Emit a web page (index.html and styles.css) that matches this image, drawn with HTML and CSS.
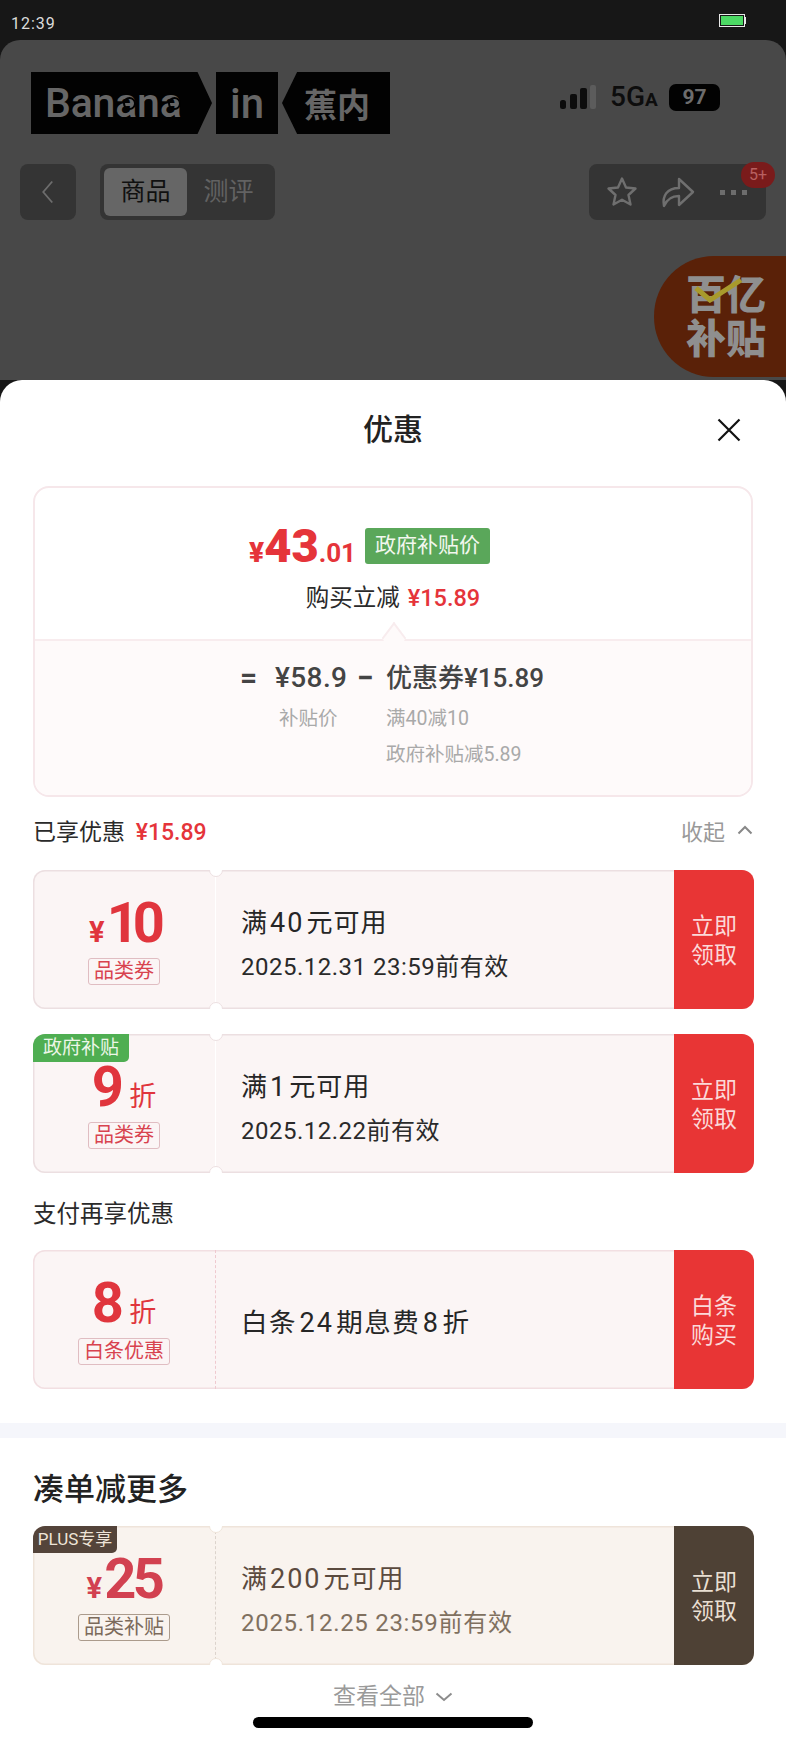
FILE: index.html
```html
<!DOCTYPE html>
<html lang="zh">
<head>
<meta charset="utf-8">
<title>优惠</title>
<link rel="stylesheet" href="styles.css">
</head>
<body>
<div class="status">
  <span class="time">12:39</span>
  <span class="battery"><span class="battery-fill"></span></span>
</div>
<div class="backdrop">
  <div class="promo-row">
    <div class="logo">
      <span class="logo-a">Banana<i class="glitch-one"></i><i class="glitch-ring"></i></span>
      <span class="logo-b">in</span>
      <span class="logo-c">蕉内</span>
    </div>
    <div class="net">
      <svg class="signal" viewBox="0 0 36 24" width="36" height="24"><rect x="0" y="15" width="6" height="9" rx="2.5" fill="#0c0c0c"/><rect x="10" y="9" width="7" height="15" rx="2" fill="#0c0c0c"/><rect x="20" y="3" width="7" height="21" rx="2" fill="#0c0c0c"/><rect x="30" y="0" width="6" height="24" rx="2" fill="#5c5c5c"/></svg>
      <span class="net-name">5G<small>A</small></span>
      <span class="net-level">97</span>
    </div>
  </div>
  <div class="nav-row">
    <div class="nav-box back">
      <svg viewBox="0 0 20 32" width="15" height="24"><path d="M15 2 3 16l12 14" fill="none" stroke="#6d6d6d" stroke-width="2.4"/></svg>
    </div>
    <div class="nav-box tabs"><span class="tab active">商品</span><span class="tab">测评</span></div>
    <div class="nav-box tools">
      <svg viewBox="0 0 32 32" width="32" height="32"><path d="M16 2.500l4 9 9.500 1-7 6.500 2 9.500-8.500-4.800-8.500 4.800 2-9.500-7-6.500 9.500-1z" fill="none" stroke="#6f6f6f" stroke-width="2.400" stroke-linejoin="round"/></svg>
      <svg viewBox="0 0 34 32" width="34" height="32"><path d="M3 30c-2-10 3-18 15-18V3l14 13-14 13v-9C11 20 6 23 3 30z" fill="none" stroke="#6f6f6f" stroke-width="2.400" stroke-linejoin="round"/></svg>
      <span class="dots"><i></i><i></i><i></i></span>
      <span class="count">5+</span>
    </div>
  </div>
  <div class="subsidy-row">
    <div class="subsidy">
      <span class="subsidy-text">百亿<br>补贴</span>
      <svg class="subsidy-check" viewBox="0 0 50 26" width="50" height="26"><path d="M3 11l14 12L48 3" fill="none" stroke="#a89a2c" stroke-width="5"/></svg>
    </div>
  </div>
</div>
<div class="sheet">
  <div class="sheet-head">
    <span></span>
    <h1 class="sheet-title">优惠</h1>
    <svg class="close" viewBox="0 0 24 24" width="24" height="24"><path d="M1.500 1.500l21 21M22.500 1.500l-21 21" fill="none" stroke="#111" stroke-width="2.200"/></svg>
  </div>
  <div class="body">
    <div class="summary">
      <div class="summary-top">
        <div class="price-row">
          <span class="price red"><span class="p-yen">¥</span><span class="p-int">43</span><span class="p-dec">.01</span></span>
          <span class="price-tag">政府补贴价</span>
        </div>
        <div class="saving">购买立减 <b class="red">¥15.89</b></div>
      </div>
      <div class="summary-bottom">
        <span class="op">=</span>
        <span class="calc calc-base">¥58.9</span>
        <span class="op">−</span>
        <span class="calc">优惠券¥15.89</span>
        <span></span>
        <span class="note note-center">补贴价</span>
        <span></span>
        <span class="note">满40减10<br>政府补贴减5.89</span>
      </div>
    </div>

    <div class="row-head enjoyed">
      <span>已享优惠 <b class="red">¥15.89</b></span>
      <span class="fold">收起
        <svg viewBox="0 0 16 10" width="16" height="10"><path d="M1.500 8.500 8 2l6.500 6.500" fill="none" stroke="#888" stroke-width="2"/></svg>
      </span>
    </div>

    <div class="coupon">
      <div class="coupon-left">
        <div class="amount"><span class="yen">¥</span><span class="num tight">10</span></div>
        <span class="kind">品类券</span>
      </div>
      <div class="coupon-main">
        <div class="cond">满<span class="d">40</span>元可用</div>
        <div class="date">2025.12.31 23:59前有效</div>
      </div>
      <div class="coupon-btn">立即<br>领取</div>
      <i class="cut top"></i><i class="cut bottom"></i>
    </div>

    <div class="coupon second">
      <span class="flag">政府补贴</span>
      <div class="coupon-left">
        <div class="amount"><span class="num">9</span><span class="unit">折</span></div>
        <span class="kind">品类券</span>
      </div>
      <div class="coupon-main">
        <div class="cond">满<span class="d">1</span>元可用</div>
        <div class="date">2025.12.22前有效</div>
      </div>
      <div class="coupon-btn">立即<br>领取</div>
      <i class="cut top"></i><i class="cut bottom"></i>
    </div>

    <div class="row-head pay">支付再享优惠</div>

    <div class="coupon dashed">
      <div class="coupon-left">
        <div class="amount"><span class="num">8</span><span class="unit">折</span></div>
        <span class="kind">白条优惠</span>
      </div>
      <div class="coupon-main center">
        <div class="cond">白条<span class="d">24</span>期息费<span class="d">8</span>折</div>
      </div>
      <div class="coupon-btn">白条<br>购买</div>
    </div>
  </div>

  <div class="band"></div>

  <div class="body">
    <h2 class="more">凑单减更多</h2>
    <div class="coupon plus">
      <span class="flag">PLUS专享</span>
      <div class="coupon-left">
        <div class="amount"><span class="yen">¥</span><span class="num">25</span></div>
        <span class="kind">品类补贴</span>
      </div>
      <div class="coupon-main">
        <div class="cond">满<span class="d">200</span>元可用</div>
        <div class="date">2025.12.25 23:59前有效</div>
      </div>
      <div class="coupon-btn">立即<br>领取</div>
      <i class="cut top"></i><i class="cut bottom"></i>
    </div>
    <div class="see-all">查看全部
      <svg viewBox="0 0 18 10" width="18" height="10"><path d="M1.500 1.500 9 8l7.500-6.500" fill="none" stroke="#8c8c8c" stroke-width="2"/></svg>
    </div>
  </div>
  <div class="home-bar"></div>
</div>
</body>
</html>
```
FILE: styles.css
```css
* { box-sizing: border-box; }
html, body { margin: 0; padding: 0; }
body {
  width: 786px;
  height: 1744px;
  overflow: hidden;
  background: #171717;
  color: #222;
  font-family: Roboto, "Noto Sans CJK SC", sans-serif;
}
.red { color: #e5343a; }
b { font-weight: 500; }

/* status bar */
.status {
  height: 40px;
  display: flex;
  align-items: center;
  justify-content: space-between;
  padding: 6px 41px 0 11px;
  background: #171717;
}
.time { color: #dcdcdc; font-size: 16px; letter-spacing: 1px; }
.battery {
  position: relative;
  width: 26px;
  height: 13px;
  padding: 1px;
  border: 1px solid #e8e8e8;
  margin-top: -6px;
}
.battery::after {
  content: "";
  position: absolute;
  left: 24px;
  top: 2px;
  width: 2px;
  height: 7px;
  background: #e8e8e8;
}
.battery-fill { display: block; height: 100%; background: #4cd964; }

/* dimmed page behind the sheet */
.backdrop {
  height: 340px;
  padding-top: 32px;
  background: #484848;
  border-radius: 20px 20px 0 0;
}
.promo-row {
  display: flex;
  justify-content: space-between;
  align-items: flex-start;
  height: 62px;
  padding: 0 66px 0 31px;
}
.logo { display: flex; height: 62px; color: #666; }
.logo span { display: flex; align-items: center; background: #020202; }
.logo-a {
  position: relative;
  width: 181px;
  padding-left: 14px;
  font-size: 41px;
  font-weight: 500;
  letter-spacing: -.2px;
  clip-path: polygon(0 0, 92% 0, 100% 50%, 92% 100%, 0 100%);
}
.glitch-one, .glitch-ring {
  position: absolute;
  top: 25px;
  width: 13px;
  height: 13px;
  border: 2.500px solid #020202;
  border-radius: 50%;
}
.glitch-one { left: 92px; }
.glitch-ring { left: 137px; }
.logo-b {
  width: 62px;
  margin-left: 4px;
  justify-content: center;
  font-size: 42px;
  font-weight: 500;
}
.logo-c {
  width: 108px;
  margin-left: 4px;
  padding-left: 22px;
  font-size: 33px;
  font-weight: 700;
  clip-path: polygon(0 50%, 14% 0, 100% 0, 100% 100%, 14% 100%);
}
.net { display: flex; align-items: center; height: 40px; margin-top: 5px; }
.signal { margin-right: 14px; }
.net-name { width: 59px; color: #0d0d0d; font-size: 28px; font-weight: 500; line-height: 1; }
.net-name small { font-size: 19px; font-weight: 700; }
.net-level {
  width: 51px;
  height: 27px;
  border-radius: 7px;
  background: #020202;
  color: #6c6c6c;
  font-size: 21px;
  font-weight: 700;
  line-height: 27px;
  text-align: center;
}

.nav-row { display: flex; height: 56px; margin-top: 30px; padding: 0 20px; }
.nav-box {
  display: flex;
  align-items: center;
  height: 56px;
  border-radius: 8px;
  background: #343434;
}
.back { width: 56px; justify-content: center; }
.tabs { width: 175px; margin-left: 24px; padding: 4px; }
.tab { width: 83px; color: #626262; font-size: 25px; line-height: 48px; text-align: center; }
.tab.active { border-radius: 6px; background: #666; color: #101010; }
.tools {
  position: relative;
  width: 177px;
  margin-left: auto;
  padding-left: 17px;
  gap: 23px;
}
.dots { display: flex; gap: 6px; margin-left: 2px; }
.dots i { width: 5px; height: 5px; background: #6d6d6d; }
.count {
  position: absolute;
  right: -9px;
  top: -2px;
  width: 34px;
  height: 26px;
  border-radius: 14px;
  background: #7a1b1b;
  color: #b86060;
  font-size: 16px;
  line-height: 26px;
  text-align: center;
}
.subsidy-row { display: flex; justify-content: flex-end; margin-top: 36px; }
.subsidy {
  position: relative;
  width: 132px;
  height: 121px;
  padding: 18px 0 0 32px;
  border-radius: 60px 0 0 60px;
  background: #5a2108;
}
.subsidy-text {
  display: block;
  color: #8f8f8f;
  font-size: 40px;
  font-weight: 900;
  line-height: 44px;
}
.subsidy-check { position: absolute; left: 39px; top: 21px; }

/* bottom sheet */
.sheet {
  height: 1364px;
  border-radius: 22px 22px 0 0;
  background: #fff;
  overflow: hidden;
}
.sheet-head {
  display: grid;
  grid-template-columns: 1fr auto 1fr;
  align-items: center;
  height: 106px;
  padding: 0 45px 6px;
}
.sheet-title { margin: 0; color: #222; font-size: 30px; font-weight: 500; line-height: 40px; }
.close { justify-self: end; }
.body { padding: 0 33px; }

.summary {
  width: 720px;
  height: 311px;
  border: 2px solid #f6e7ea;
  border-radius: 16px;
  overflow: hidden;
}
.summary-top { position: relative; height: 153px; padding-top: 40px; border-bottom: 2px solid #f8ecee; }
.summary-top::after {
  content: "";
  position: absolute;
  left: 349px;
  bottom: -9px;
  width: 18px;
  height: 18px;
  border-top: 2px solid #f8ecee;
  border-left: 2px solid #f8ecee;
  background: #fefafa;
  transform: rotate(45deg) skew(8deg, 8deg);
}
.price-row { display: flex; justify-content: center; align-items: flex-end; gap: 9px; height: 36px; padding-right: 47px; }
.price { display: flex; align-items: baseline; margin-bottom: -7px; font-weight: 900; line-height: 36px; }
.p-yen { font-size: 28px; }
.p-int { font-size: 47px; }
.p-dec { font-size: 26px; font-weight: 700; }
.price-tag {
  width: 125px;
  height: 36px;
  border-radius: 3px;
  background: #5aa75a;
  color: #f2f7ef;
  font-size: 21px;
  line-height: 35px;
  text-align: center;
}
.saving { margin-top: 18px; color: #2a2a2a; font-size: 23.500px; line-height: 32px; text-align: center; }
.saving b { margin-left: 2px; font-size: 23.500px; }
.summary-bottom {
  display: grid;
  grid-template-columns: 33px 84px 29px auto;
  grid-template-rows: 32px auto;
  row-gap: 7px;
  justify-content: start;
  height: 156px;
  padding: 21px 0 0 205px;
  background: #fefafa;
}
.op { color: #444; font-size: 30px; font-weight: 700; line-height: 32px; }
.calc { color: #444; font-size: 26px; font-weight: 500; line-height: 32px; white-space: nowrap; }
.calc-base { margin-left: 2px; font-size: 28px; letter-spacing: .4px; }
.note { color: #a9a9a9; font-size: 19.500px; line-height: 36px; white-space: nowrap; }
.note-center { padding-left: 6px; }

.row-head { display: flex; align-items: center; height: 40px; color: #2a2a2a; font-size: 23px; }
.enjoyed { justify-content: space-between; margin: 13px 0 20px; }
.enjoyed b { font-size: 23px; margin-left: 5px; }
.fold { display: flex; align-items: center; gap: 12px; color: #999; font-size: 22px; }
.pay { margin: 19px 0 18px; font-size: 23.500px; }

/* coupons */
.coupon {
  position: relative;
  display: flex;
  width: 721px;
  height: 139px;
  border-radius: 12px;
  background: #fbf5f5;
  box-shadow: inset 0 0 0 1.500px #ecdfe1;
  overflow: hidden;
}
.coupon.second { margin-top: 25px; }
.coupon-left {
  display: flex;
  flex: 0 0 183px;
  flex-direction: column;
  align-items: center;
  padding-top: 31px;
  border-right: 1.500px solid #fff;
}
.amount {
  display: flex;
  align-items: baseline;
  height: 44px;
  color: #e0353d;
  font-weight: 700;
  line-height: 44px;
}
.yen { margin-right: 2px; font-size: 29px; }
.num { font-size: 56px; letter-spacing: -3.500px; }
.num.tight { letter-spacing: -6px; }
.unit { margin-left: 9px; font-size: 27px; font-weight: 400; }
.kind {
  height: 27px;
  margin-top: 13px;
  padding: 0 5px;
  border: 1px solid #e0bdc2;
  border-radius: 3px;
  color: #d8434f;
  font-size: 20px;
  line-height: 24px;
}
.coupon-main { flex: 1; padding: 37px 0 0 25px; }
.cond { font-size: 26px; line-height: 32px; letter-spacing: 1px; color: #262626; }
.d { margin: 0 2px; font-size: 27px; letter-spacing: 2px; }
.date { margin-top: 12px; font-size: 24px; line-height: 32px; letter-spacing: .500px; color: #2a2a2a; }
.coupon-btn {
  display: flex;
  flex: 0 0 80px;
  align-items: center;
  justify-content: center;
  padding-top: 3px;
  background: #e83535;
  color: #fbd9d9;
  font-size: 23px;
  line-height: 29px;
  text-align: center;
}
.cut {
  position: absolute;
  left: 176px;
  width: 14px;
  height: 14px;
  border: 1.500px solid #ecdfe1;
  border-radius: 50%;
  background: #fff;
}
.cut.top { top: -7px; }
.cut.bottom { bottom: -7px; }
.flag {
  position: absolute;
  left: 0;
  top: 0;
  width: 96px;
  height: 28px;
  border-radius: 0 0 5px 0;
  background: #4fae52;
  color: #ecf6e8;
  font-size: 19px;
  line-height: 27px;
  text-align: center;
}
.dashed { box-shadow: inset 0 0 0 1.500px #f2dfe2; }
.dashed .coupon-left { border-right: 1px dashed #efc9cf; }
.dashed .coupon-main.center { display: flex; align-items: center; padding: 6px 0 0 25px; }
.dashed .cond { font-size: 26.500px; letter-spacing: 1.500px; }
.dashed .d { margin: 0 2.500px; letter-spacing: 2px; }

.band { height: 15px; margin-top: 34px; background: #f5f6fb; }
.more { margin: 32px 0 16px; color: #222; font-size: 31px; font-weight: 500; line-height: 40px; }
.plus { background: #f9f3ee; box-shadow: inset 0 0 0 1.500px #efe4da; }
.plus .flag { width: 84px; height: 27px; background: #54443a; color: #efe4d8; font-size: 17px; white-space: nowrap; }
.plus .amount { color: #d24150; }
.plus .kind { border-color: #ab9b8c; color: #7b6a5b; }
.plus .coupon-left { border-right: 1.500px dashed #dcd3cc; }
.plus .cond { color: #5b4a3e; }
.plus .date { color: #80705f; letter-spacing: .700px; }
.plus .coupon-btn { background: #4e4135; color: #e9dfd2; }
.plus .cut { border-color: #efe4da; }

.see-all {
  display: flex;
  align-items: center;
  justify-content: center;
  gap: 10px;
  height: 34px;
  margin-top: 15px;
  color: #9a9a9a;
  font-size: 23px;
  line-height: 34px;
}
.home-bar { width: 280px; height: 11px; margin: 3px auto 0; border-radius: 6px; background: #000; }
```
